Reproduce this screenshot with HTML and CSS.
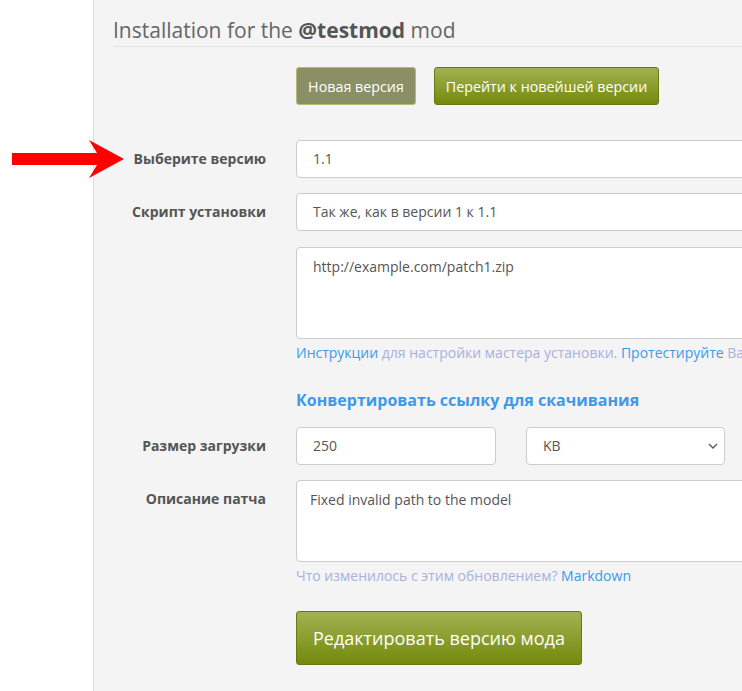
FILE: index.html
```html
<!DOCTYPE html>
<html lang="ru">
<head>
<meta charset="utf-8">
<link rel="stylesheet" href="styles.css">
</head>
<body>
<div class="page">
  <aside class="sidebar"></aside>
  <main class="main">
    <h2 class="title">Installation for the <b>@testmod</b> mod</h2>
    <form class="form">
      <div class="row row-buttons">
        <div class="label"></div>
        <div class="field buttons">
          <button type="button" class="btn btn-muted">Новая версия</button>
          <button type="button" class="btn btn-green">Перейти к новейшей версии</button>
        </div>
      </div>
      <div class="row row-version">
        <label class="label">Выберите версию</label>
        <div class="field"><div class="input">1.1</div></div>
      </div>
      <div class="row row-script">
        <label class="label">Скрипт установки</label>
        <div class="field"><div class="input">Так же, как в версии 1 к 1.1</div></div>
      </div>
      <div class="row row-url">
        <div class="label"></div>
        <div class="field">
          <div class="textarea tall">http://example.com/patch1.zip</div>
          <p class="help"><a class="link">Инструкции</a> для настройки мастера установки. <a class="link">Протестируйте</a> Ваш скрипт установки</p>
        </div>
      </div>
      <div class="row row-convert">
        <div class="label"></div>
        <div class="field"><a class="convert">Конвертировать ссылку для скачивания</a></div>
      </div>
      <div class="row row-size">
        <label class="label">Размер загрузки</label>
        <div class="field size-fields">
          <div class="input size">250</div>
          <div class="input select">KB<svg class="chev" width="10" height="6" viewBox="0 0 10 6"><path d="M1 1l4 4 4-4" fill="none" stroke="#555" stroke-width="1.3"/></svg></div>
        </div>
      </div>
      <div class="row row-desc">
        <label class="label">Описание патча</label>
        <div class="field">
          <div class="textarea desc">Fixed invalid path to the model</div>
          <p class="help narrow">Что изменилось с этим обновлением? <a class="link">Markdown</a></p>
        </div>
      </div>
      <div class="row row-submit">
        <div class="label"></div>
        <div class="field"><button type="button" class="btn btn-green btn-lg">Редактировать версию мода</button></div>
      </div>
    </form>
  </main>
</div>
<svg class="arrow" width="742" height="691" viewBox="0 0 742 691">
  <polygon points="12,153 97,153 89,140 124,159 89,178 97,165 12,165" fill="#ff0000"/>
</svg>
</body>
</html>
```
FILE: styles.css
```css
html, body {
  margin: 0;
  padding: 0;
  height: 100%;
  overflow: hidden;
}
body {
  font-family: "Open Sans", "Liberation Sans", sans-serif;
  font-size: 14px;
  color: #555;
  background: #fff;
}
.page {
  display: flex;
  min-height: 691px;
}
.sidebar {
  width: 93px;
  flex: none;
  background: #fff;
  border-right: 1px solid #dedede;
}
.main {
  flex: 1;
  background: #f4f4f4;
  padding-left: 19px;
  min-width: 0;
}
.title {
  margin: 16px 0 0 0;
  padding-bottom: 2px;
  font-size: 21px;
  font-weight: 400;
  line-height: 28px;
  color: #666;
  border-bottom: 1px solid #e3e3e3;
}
.title b {
  font-weight: 700;
  color: #555;
}
.form {
  display: flex;
  flex-direction: column;
}
.row {
  display: flex;
  align-items: flex-start;
}
.label {
  width: 153px;
  flex: none;
  text-align: right;
  font-weight: 700;
  color: #555;
  margin-right: 30px;
  line-height: 38px;
}
.field {
  flex: 1;
  min-width: 0;
}
.buttons {
  display: flex;
  gap: 18px;
}
.btn {
  font-family: "Open Sans", "Liberation Sans", sans-serif;
  font-size: 14.3px;
  height: 38px;
  padding: 0 8px;
  border-radius: 3px;
  color: #fff;
  cursor: pointer;
}
.btn-muted {
  background: #8a8f65;
  border: 1px solid #b3bb74;
  width: 120px;
}
.btn-green {
  background: linear-gradient(#a4b152, #728a0c);
  border: 1px solid #667a13;
  width: 225px;
}
.btn-lg {
  width: 286px;
  height: 54px;
  font-size: 18px;
}
.row-buttons { margin-top: 20px; }
.row-version { margin-top: 35px; }
.row-script { margin-top: 15px; }
.row-url { margin-top: 16px; }
.row-convert { margin-top: 21px; }
.row-size { margin-top: 15px; }
.row-desc { margin-top: 15px; }
.row-submit { margin-top: 21px; }
.input, .textarea {
  box-sizing: border-box;
  background: #fff;
  border: 1px solid #ccc;
  border-radius: 4px;
  padding: 0 16px;
  color: #555;
  font-size: 14px;
  width: calc(100% + 20px);
}
.input {
  height: 38px;
  line-height: 36px;
}
.textarea {
  padding-top: 9px;
  line-height: 20px;
}
.tall { height: 92px; }
.desc {
  height: 82px;
  padding-left: 13px;
  font-size: 14px;
}
.help {
  margin: 0;
  line-height: 28px;
  color: #a9b0de;
  white-space: nowrap;
}
.help.narrow {
  font-size: 14px;
}
.link {
  color: #3c9ae8;
}
.convert {
  display: block;
  font-size: 16px;
  font-weight: 700;
  color: #3c9ae8;
  line-height: 24px;
}
.size-fields {
  display: flex;
  gap: 30px;
}
.size-fields .size {
  width: 200px;
}
.size-fields .select {
  width: 199px;
  display: flex;
  justify-content: space-between;
  align-items: center;
  padding-left: 16px;
  padding-right: 6px;
}
.arrow {
  position: absolute;
  left: 0;
  top: 0;
  pointer-events: none;
}
```
